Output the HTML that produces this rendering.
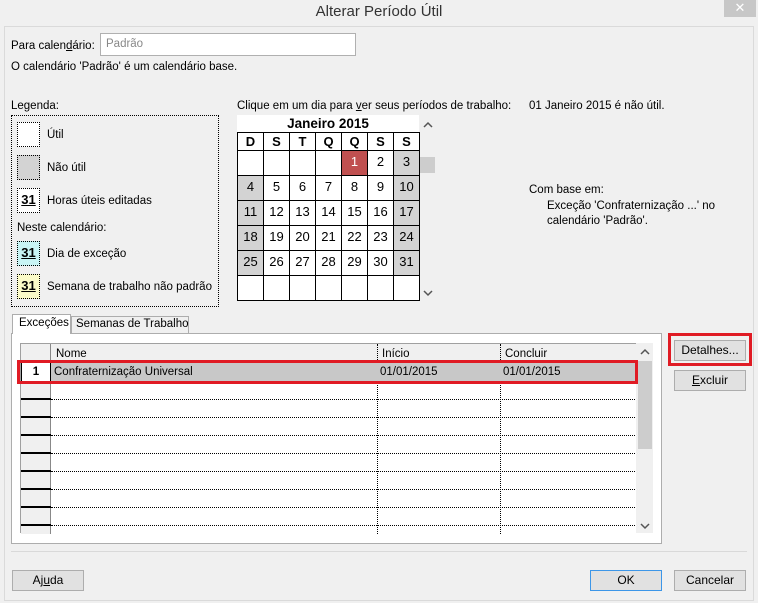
<!DOCTYPE html>
<html><head><meta charset="utf-8"><style>
*{box-sizing:border-box;margin:0;padding:0}
body{width:758px;height:603px;background:#f0f0f0;font-family:"Liberation Sans",sans-serif;font-size:11.5px;color:#000;position:relative;overflow:hidden}
.a{position:absolute;white-space:nowrap}
.btn{position:absolute;height:21px;width:72px;border:1px solid #adadad;background:#e1e1e1;text-align:center;line-height:19px;font-size:12px}
.cal{position:absolute;left:237px;top:132px;border-collapse:collapse;background:#fff}
.cal td{width:26px;height:25px;border:1px solid #000;font-size:13px;padding:3px 0 0 0;vertical-align:top;text-align:center;font-family:"Liberation Sans",sans-serif}
.cal tr.h td{height:18px;font-weight:bold;font-size:13px;padding:0;vertical-align:middle}
.g{background:#d3d3d3}
.lb{position:absolute;left:17px;width:23px;height:25px;border:1px dotted #000;background:#fff;font-weight:bold;font-size:13px;text-align:center;text-decoration:underline;line-height:22px}
.grid{position:absolute;left:20px;top:343px;width:616px;height:190px;background:#fff;border-left:1px solid #a0a0a0;border-top:1px solid #a0a0a0}
.hline{position:absolute;left:30px;width:586px;border-top:1px dotted #000}
.rh{position:absolute;left:0;width:30px;border-top:2px solid #000}
.chev{position:absolute;width:12px;height:8px}
</style></head><body>
<div class="a" style="left:0;top:0;width:758px;height:26px;background:#f0f0f0"></div>
<div class="a" style="left:0;top:3px;width:758px;text-align:center;font-size:15px;color:#333">Alterar Período Útil</div>
<div class="a" style="left:724px;top:0;width:32px;height:17px;background:#c7c7c7;color:#fff;text-align:center;font-size:13px;line-height:16px">✕</div>
<div class="a" style="left:4px;top:26px;width:750px;height:575px;border:1px solid #dadada"></div>

<div class="a" style="left:11px;top:40px">Para calen<u>d</u>ário:</div>
<div class="a" style="left:100px;top:33px;width:256px;height:23px;border:1px solid #b0b0b0;background:#fff;color:#888;padding:4px 5px">Padrão</div>
<div class="a" style="left:11px;top:61px">O calendário 'Padrão' é um calendário base.</div>

<div class="a" style="left:11px;top:100px">Legenda:</div>
<div class="a" style="left:11px;top:115px;width:208px;height:192px;border:1px dotted #000"></div>
<div class="lb" style="top:122px"></div><div class="a" style="left:47px;top:129px">Útil</div>
<div class="lb" style="top:155px;background:#d3d3d3"></div><div class="a" style="left:47px;top:162px">Não útil</div>
<div class="lb" style="top:188px">31</div><div class="a" style="left:47px;top:195px">Horas úteis editadas</div>
<div class="a" style="left:17px;top:222px">Neste calendário:</div>
<div class="lb" style="top:241px;background:#c8f4f4">31</div><div class="a" style="left:47px;top:248px">Dia de exceção</div>
<div class="lb" style="top:274px;background:#fbfbc8">31</div><div class="a" style="left:47px;top:281px">Semana de trabalho não padrão</div>

<div class="a" style="left:237px;top:100px">Clique em um dia para <u>v</u>er seus períodos de trabalho:</div>
<div class="a" style="left:529px;top:100px">01 Janeiro 2015 é não útil.</div>
<div class="a" style="left:529px;top:184px">Com base em:</div>
<div class="a" style="left:547px;top:200px">Exceção 'Confraternização ...' no</div>
<div class="a" style="left:547px;top:215px">calendário 'Padrão'.</div>

<div class="a" style="left:237px;top:115px;width:182px;height:18px;background:#fff;text-align:center;font-weight:bold;font-size:13.5px;line-height:17px">Janeiro 2015</div>
<table class="cal">
<tr class="h"><td>D</td><td>S</td><td>T</td><td>Q</td><td>Q</td><td>S</td><td>S</td></tr>
<tr><td></td><td></td><td></td><td></td><td style="background:#c05050;color:#fff">1</td><td>2</td><td class="g">3</td></tr>
<tr><td class="g">4</td><td>5</td><td>6</td><td>7</td><td>8</td><td>9</td><td class="g">10</td></tr>
<tr><td class="g">11</td><td>12</td><td>13</td><td>14</td><td>15</td><td>16</td><td class="g">17</td></tr>
<tr><td class="g">18</td><td>19</td><td>20</td><td>21</td><td>22</td><td>23</td><td class="g">24</td></tr>
<tr><td class="g">25</td><td>26</td><td>27</td><td>28</td><td>29</td><td>30</td><td class="g">31</td></tr>
<tr><td></td><td></td><td></td><td></td><td></td><td></td><td></td></tr>
</table>
<svg class="chev" style="left:422px;top:121px" viewBox="0 0 12 8"><path d="M2 6L6 2L10 6" fill="none" stroke="#555" stroke-width="1.5"/></svg>
<div class="a" style="left:420px;top:157px;width:15px;height:16px;background:#cdcdcd"></div>
<svg class="chev" style="left:422px;top:289px" viewBox="0 0 12 8"><path d="M2 2L6 6L10 2" fill="none" stroke="#555" stroke-width="1.5"/></svg>

<div class="a" style="left:11px;top:333px;width:651px;height:211px;border:1px solid #adadad;background:#fff"></div>
<div class="a" style="left:12px;top:314px;width:59px;height:20px;background:#fff;border:1px solid #adadad;border-bottom:none;padding:2px 0 0 6px">Exceções</div>
<div class="a" style="left:71px;top:316px;width:118px;height:17px;background:#f0f0f0;border:1px solid #adadad;border-bottom:none;padding:1px 0 0 4px">Semanas de Trabalho</div>

<div class="grid">
<div class="a" style="left:0;top:0;width:30px;height:190px;background:#f0f0f0;border-right:1px solid #888"></div>
<div class="a" style="left:30px;top:0;width:586px;height:17px;background:#f0f0f0"></div>
<div class="a" style="left:356px;top:0;height:190px;border-left:1px dotted #000"></div>
<div class="a" style="left:479px;top:0;height:190px;border-left:1px dotted #000"></div>
<div class="a" style="left:35px;top:4px">Nome</div>
<div class="a" style="left:361px;top:4px">Início</div>
<div class="a" style="left:484px;top:4px">Concluir</div>
<div class="a" style="left:0;top:17px;width:616px;height:22px;background:#c8c8c8"></div>
<div class="a" style="left:0;top:17px;width:30px;height:22px;background:#fff;border:1px solid #000;text-align:center;font-weight:bold;line-height:20px">1</div>
<div class="a" style="left:33px;top:22px">Confraternização Universal</div>
<div class="a" style="left:359px;top:22px">01/01/2015</div>
<div class="a" style="left:482px;top:22px">01/01/2015</div>
<div class="hline" style="top:55px"></div><div class="rh" style="top:54px"></div>
<div class="hline" style="top:73px"></div><div class="rh" style="top:72px"></div>
<div class="hline" style="top:91px"></div><div class="rh" style="top:90px"></div>
<div class="hline" style="top:109px"></div><div class="rh" style="top:108px"></div>
<div class="hline" style="top:127px"></div><div class="rh" style="top:126px"></div>
<div class="hline" style="top:145px"></div><div class="rh" style="top:144px"></div>
<div class="hline" style="top:163px"></div><div class="rh" style="top:162px"></div>
<div class="hline" style="top:181px"></div><div class="rh" style="top:180px"></div>
</div>
<div class="a" style="left:636px;top:343px;width:17px;height:190px;background:#f0f0f0"></div>
<div class="a" style="left:638px;top:361px;width:14px;height:88px;background:#cdcdcd"></div>
<svg class="chev" style="left:639px;top:348px" viewBox="0 0 12 8"><path d="M2 6L6 2L10 6" fill="none" stroke="#555" stroke-width="1.5"/></svg>
<svg class="chev" style="left:639px;top:522px" viewBox="0 0 12 8"><path d="M2 2L6 6L10 2" fill="none" stroke="#555" stroke-width="1.5"/></svg>
<div class="a" style="left:17px;top:360px;width:621px;height:24px;border:3px solid #e01b24"></div>

<div class="a" style="left:668px;top:333px;width:84px;height:33px;border:3px solid #e01b24"></div>
<div class="btn" style="left:674px;top:340px">Detalhes...</div>
<div class="btn" style="left:674px;top:370px"><u>E</u>xcluir</div>

<div class="a" style="left:11px;top:551px;width:736px;border-top:1px solid #d9d9d9"></div>
<div class="btn" style="left:12px;top:570px">Aj<u>u</u>da</div>
<div class="btn" style="left:590px;top:570px;border-color:#3c96e8">OK</div>
<div class="btn" style="left:674px;top:570px">Cancelar</div>
</body></html>
